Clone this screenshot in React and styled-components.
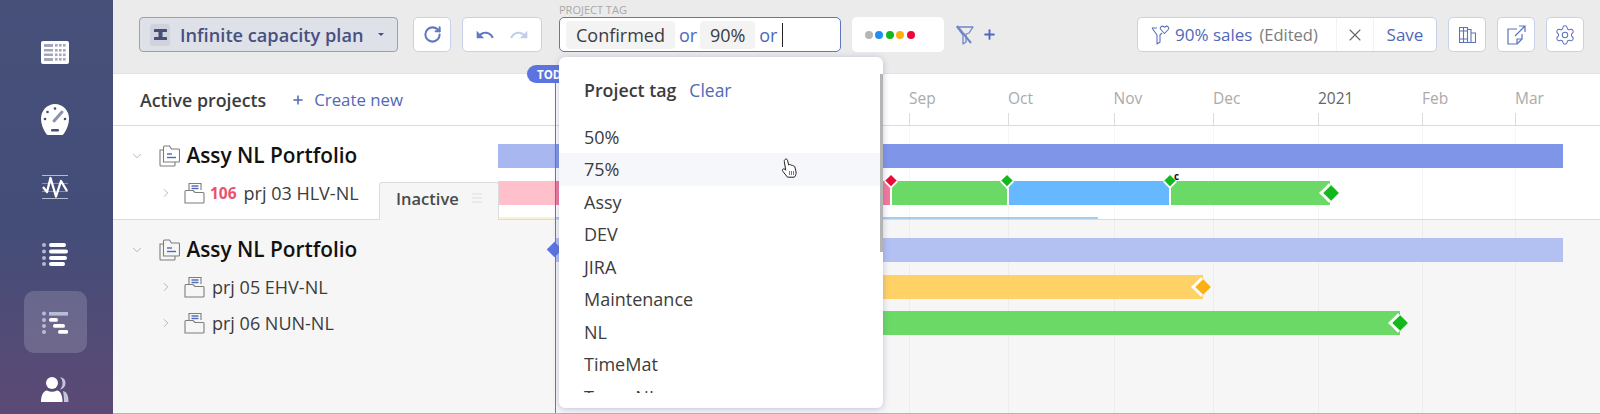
import React from 'react';
import styled, { createGlobalStyle } from 'styled-components';
import { RotateCw, Plus, X, Settings, ChevronDown, ChevronRight, Menu } from 'lucide-react';
import { MdUndo, MdRedo } from 'react-icons/md';

const GlobalStyle = createGlobalStyle`
    html, body {
        margin: 0;
        padding: 0;
        background: #fff;
    }
    * {
        box-sizing: border-box;
    }
    body {
        font-family: "Open Sans", "Liberation Sans", sans-serif;
    }
`

const TableIcon = () => (
    <svg width="28" height="23" viewBox="0 0 28 23">
        <rect width="28" height="23" rx="2" fill="#fff" />
        <g fill="#a3a7bb">
            <rect x="3" y="3" width="9" height="3" />
            <rect x="3" y="8" width="9" height="2.5" />
            <rect x="3" y="12.5" width="9" height="2.5" />
            <rect x="3" y="17" width="9" height="3" />
            {[14, 18, 22].map(x => [3, 8, 12.5, 17].map(y => <rect key={`${x}-${y}`} x={x} y={y} width="2.6" height="2.6" />))}
        </g>
    </svg>
);

const GaugeIcon = () => (
    <svg width="28" height="31" viewBox="0 0 28 31">
        <path d="M14 0C6.300 0 0 6.500 0 14.500c0 6 2.300 11 5 15 .7 1 1.500 1.500 2.500 1.500h13c1 0 1.800-.5 2.500-1.500 2.700-4 5-9 5-15C28 6.500 21.700 0 14 0z" fill="#fff" />
        <path d="M13 17l8-9" stroke="#8d91aa" strokeWidth="3" strokeLinecap="round" />
        <g fill="#454e78">
            <circle cx="14" cy="4.500" r="1.300" />
            <circle cx="6.500" cy="8" r="1.300" />
            <circle cx="4" cy="15" r="1.300" />
            <circle cx="24" cy="15" r="1.300" />
            <rect x="10" y="25" width="8" height="2.400" rx="1" />
        </g>
    </svg>
);

const PulseIcon = () => (
    <svg width="26" height="24" viewBox="0 0 26 24">
        <path d="M0 .5h26M0 23.500h26" stroke="#b6bacd" strokeWidth="1" />
        <path d="M0 8.500h26M0 16.500h26" stroke="#8a8fac" strokeWidth="1" />
        <path d="M1 12l4 5 3.500-14L14 21.500 19 6l6 10" fill="none" stroke="#fff" strokeWidth="2.300" strokeLinejoin="round" />
    </svg>
);

const ListIcon = () => (
    <svg width="26" height="25" viewBox="0 0 26 25">
        <g fill="#b4b8d0">
            <circle cx="2" cy="3" r="2" />
            <circle cx="2" cy="9.500" r="2" />
            <circle cx="2" cy="16" r="2" />
            <circle cx="2" cy="22" r="2" />
        </g>
        <g fill="#fff">
            <rect x="7" y="1" width="17" height="4" rx="2" />
            <rect x="7" y="7.500" width="19" height="4" rx="2" />
            <rect x="7" y="14" width="18" height="4" rx="2" />
            <rect x="7" y="20" width="16" height="4" rx="2" />
        </g>
    </svg>
);

const GanttIcon = () => (
    <svg width="26" height="23" viewBox="0 0 26 23">
        <g fill="#b9bdd3">
            <circle cx="2" cy="2.500" r="2" />
            <circle cx="2" cy="9" r="2" />
            <circle cx="2" cy="15" r="2" />
            <circle cx="2" cy="21" r="2" />
            <rect x="7" y="1" width="19" height="3.600" />
        </g>
        <g fill="#fff">
            <rect x="7" y="7" width="9" height="3.800" rx="1.900" />
            <rect x="11" y="13" width="12" height="3.800" rx="1.900" />
            <rect x="16" y="19" width="10.500" height="3.800" rx="1.900" />
        </g>
    </svg>
);

const UsersIcon = () => (
    <svg width="28" height="25" viewBox="0 0 28 25">
        <path d="M19 0c4 1 5.500 3 5.500 6s-2 6-5.500 6.500c1.800-2 2.500-4 2.500-6.500S20.500 1.500 19 0z" fill="#c4c4d8" />
        <path d="M22 14c4 .8 5.500 4 5.500 11h-4.500c0-5-.5-8-1-11z" fill="#c4c4d8" />
        <circle cx="11" cy="6" r="6" fill="#fff" />
        <path d="M0 25c0-7 2.500-11 6-11.500 3 1.600 7 1.600 10 0 3.500.5 5.500 4.500 5.500 11.500z" fill="#fff" />
    </svg>
);

const PlanIcon = () => (
    <svg width="13" height="11" viewBox="0 0 13 11" fill="#474f78">
        <rect width="13" height="3" rx=".5" />
        <rect y="8" width="13" height="3" rx=".5" />
        <rect x="4.500" y="2" width="4" height="7" />
    </svg>
);

const FilterOffIcon = () => (
    <svg width="18" height="20" viewBox="0 0 18 20" fill="none" stroke="#7186c8" strokeWidth="1.300">
        <path d="M1 2h16l-4 6-3 1v8l-3 2v-9z" strokeLinejoin="round" />
        <path d="M1 1l14 17" strokeWidth="2" />
    </svg>
);

const HeartFilterIcon = () => (
    <svg width="19" height="20" viewBox="0 0 19 20" fill="none" stroke="#5c72bb" strokeWidth="1.100">
        <path d="M1 3h5M1 3l5 7v9l3-2v-7l2-2" strokeLinejoin="round" />
        <path d="M13.500 8.500l-3.700-4c-1.500-2 .8-4.300 3-2.800l.7.6.7-.6c2.200-1.500 4.500.8 3 2.800z" strokeLinejoin="round" />
    </svg>
);

const BooksIcon = () => (
    <svg width="17" height="17" viewBox="0 0 17 17" fill="none" stroke="#5c72bb" strokeWidth="1.100">
        <path d="M.5 1.500h4v15h-4zM4.500 1.500h4v15h-4zM8.500 3.500h3.500v13H8.500zM12 7h4.500v9.500H12zM.5 5h4M.5 13h8M4.500 5h4" />
    </svg>
);

const ExportIcon = () => (
    <svg width="19" height="20" viewBox="0 0 19 20" fill="none" stroke="#5c72bb" strokeWidth="1.200">
        <path d="M10 4H1v15h9l5-5V9" strokeLinejoin="round" />
        <path d="M10 19v-5h5" strokeLinejoin="round" />
        <path d="M8 11l10-10M12 1h6v6" />
    </svg>
);

const FolderStackIcon = () => (
    <svg width="21" height="22" viewBox="0 0 21 22" fill="none" stroke="#7d7d7d" strokeWidth="1.100">
        <path d="M4.500 17V2a1 1 0 0 1 1-1h5l2 3h7a1 1 0 0 1 1 1v11a1 1 0 0 1-1 1z" />
        <path d="M4.500 5H1v15a1 1 0 0 0 1 1h13a1 1 0 0 0 1-1v-3" />
        <path d="M8 9h5" stroke="#5068b8" strokeWidth="1.400" />
        <path d="M8 12.500h9" stroke="#5068b8" strokeWidth="1.400" />
    </svg>
);

const ProjectIcon = () => (
    <svg width="21" height="22" viewBox="0 0 21 22" fill="none" stroke="#7d7d7d" strokeWidth="1.100">
        <path d="M5 8V1.500h12V8" />
        <path d="M1 21V9.500a1 1 0 0 1 1-1h7l2 2h8a1 1 0 0 1 1 1V20a1 1 0 0 1-1 1z" />
        <path d="M7.500 4h7" stroke="#5068b8" strokeWidth="1.400" />
        <path d="M7.500 6.500h7" stroke="#5068b8" strokeWidth="1.400" />
    </svg>
);

const HandCursor = () => (
    <svg width="17" height="21" viewBox="0 0 17 21">
        <path d="M4 1.500c1-.8 2.200-.5 2.500.7l1.200 4.800 1-.4c.8-.2 1.300.2 1.500.8.700-.4 1.500-.2 1.800.6.800-.3 1.500.1 1.800.8l1.200 5c.4 2-.3 3.800-1.700 5.400H6.500L2 13.500c-.8-1-.8-2 0-2.500.8-.4 1.700 0 2.700 1.200L3.300 3.500c-.1-.9.100-1.500.7-2z" fill="#fff" stroke="#222" strokeWidth="1" strokeLinejoin="round" />
        <path d="M8.500 13v4M10.500 13v4M12.500 13v4" stroke="#555" strokeWidth=".8" />
    </svg>
);

const navItems = [
    { icon: <TableIcon /> },
    { icon: <GaugeIcon /> },
    { icon: <PulseIcon /> },
    { icon: <ListIcon /> },
    { icon: <GanttIcon />, active: true },
    { icon: <UsersIcon /> },
];

const months = [
    { label: 'Sep', width: 99 },
    { label: 'Oct', width: 105.5 },
    { label: 'Nov', width: 99.5 },
    { label: 'Dec', width: 105 },
    { label: '2021', width: 104, year: true },
    { label: 'Feb', width: 93 },
    { label: 'Mar', width: 85 },
];

const gridLines = [411, 510, 615.5, 715, 820, 924, 1017];

const colorDots = ['#b5b5b5', '#1e90f0', '#12b81e', '#fdb012', '#ea0a38'];

const tagOptions = ['50%', '75%', 'Assy', 'DEV', 'JIRA', 'Maintenance', 'NL', 'TimeMat', 'Team NL'];

const App = () => {
    return (
        <>
            <GlobalStyle />
            <Page>
                <Sidebar>
                    {navItems.map((item, i) => (
                        <NavItem key={i} $active={item.active}>{item.icon}</NavItem>
                    ))}
                </Sidebar>
                <Main>
                    <Toolbar>
                        <PlanSelect>
                            <PlanBadge><PlanIcon /></PlanBadge>
                            <PlanName>Infinite capacity plan</PlanName>
                            <Caret />
                        </PlanSelect>
                        <IconButton $ml={15}><RotateCw size={19} strokeWidth={2.6} color="#5f7ac4" /></IconButton>
                        <UndoGroup>
                            <MdUndo size={20} color="#5f7ac4" />
                            <MdRedo size={20} color="#c3cde8" />
                        </UndoGroup>
                        <TagField>
                            <FieldLabel>PROJECT TAG</FieldLabel>
                            <Chip $width={109}>Confirmed</Chip>
                            <OrWord $ml={4}>or</OrWord>
                            <Chip $width={55} $ml={3}>90%</Chip>
                            <OrWord $ml={4}>or</OrWord>
                            <Caretline />
                            <Dropdown>
                                <DropdownHead>
                                    <DropdownTitle>Project tag</DropdownTitle>
                                    <ClearLink>Clear</ClearLink>
                                </DropdownHead>
                                <OptionList>
                                    {tagOptions.map(option => (
                                        <OptionRow key={option} $hover={option === '75%'}>
                                            {option}
                                            {option === '75%' && <CursorSpot><HandCursor /></CursorSpot>}
                                        </OptionRow>
                                    ))}
                                </OptionList>
                                <ScrollThumb />
                            </Dropdown>
                        </TagField>
                        <ColorField>
                            {colorDots.map(color => <Dot key={color} $color={color} />)}
                        </ColorField>
                        <FilterOffSlot><FilterOffIcon /></FilterOffSlot>
                        <AddFilter><Plus size={15} strokeWidth={3} color="#5068c0" /></AddFilter>
                        <Spacer />
                        <SavedFilter>
                            <SavedName>
                                <HeartFilterIcon />
                                <SavedLabel>90% sales</SavedLabel>
                                <EditedLabel>(Edited)</EditedLabel>
                            </SavedName>
                            <SavedClose><X size={20} strokeWidth={1.3} color="#666" /></SavedClose>
                            <SaveLink>Save</SaveLink>
                        </SavedFilter>
                        <IconButton $ml={11}><BooksIcon /></IconButton>
                        <IconButton $ml={11}><ExportIcon /></IconButton>
                        <IconButton $ml={11}><Settings size={22} strokeWidth={1.1} color="#5c72bb" /></IconButton>
                    </Toolbar>

                    <ProjectHeader>
                        <HeaderLeft>
                            <HeaderTitle>Active projects</HeaderTitle>
                            <CreateNew><Plus size={14} strokeWidth={2.6} />Create new</CreateNew>
                        </HeaderLeft>
                        <Timeline>
                            {months.map(month => (
                                <Month key={month.label} $width={month.width} $year={month.year}>{month.label}</Month>
                            ))}
                        </Timeline>
                    </ProjectHeader>

                    <Body>
                        {gridLines.map(x => <GridLine key={x} $left={x} />)}
                        <TodayLine>
                            <TodayBadge>TODAY</TodayBadge>
                        </TodayLine>

                        <Section $top>
                            <Row>
                                <NameCell>
                                    <Chevron $wide><ChevronDown size={14} strokeWidth={1.2} color="#999" /></Chevron>
                                    <FolderStackIcon />
                                    <PortfolioName>Assy NL Portfolio</PortfolioName>
                                </NameCell>
                                <Track>
                                    <Bar $width={57.5} $color="#a9b7f0" />
                                    <Bar $width={1007.5} $color="#7f96e8" />
                                </Track>
                            </Row>
                            <Row>
                                <NameCell $child>
                                    <Chevron><ChevronRight size={14} strokeWidth={1.2} color="#999" /></Chevron>
                                    <ProjectIcon />
                                    <Count>106</Count>
                                    <ProjectName>prj 03 HLV-NL</ProjectName>
                                    <InactiveTab>
                                        Inactive
                                        <Menu size={14} strokeWidth={1} color="#ccc" />
                                    </InactiveTab>
                                </NameCell>
                                <Track>
                                    <Bar $width={57} $color="#ffc0cb" />
                                    <Bar $width={335} $color="#f4789a" />
                                    <Bar $width={115} $ml={2} $color="#6bd966" />
                                    <Bar $width={160} $ml={2} $color="#66b8ff" />
                                    <Bar $width={159} $ml={2} $color="#6bd966" />
                                    <Milestone $left={388} $color="#ea0a38" />
                                    <Milestone $left={504} $color="#12b81e" />
                                    <Milestone $left={667} $color="#12b81e" />
                                    <MilestoneTag>c</MilestoneTag>
                                    <EndMilestone $left={830} $color="#12b81e" />
                                </Track>
                            </Row>
                            <ThinRow>
                                <Bar $width={57} $color="#fbf1d4" />
                                <Bar $width={543} $color="#a6cdea" />
                            </ThinRow>
                        </Section>

                        <Section>
                            <Row>
                                <NameCell>
                                    <Chevron $wide><ChevronDown size={14} strokeWidth={1.2} color="#999" /></Chevron>
                                    <FolderStackIcon />
                                    <PortfolioName>Assy NL Portfolio</PortfolioName>
                                </NameCell>
                                <Track>
                                    <Bar $width={57} $color="transparent" />
                                    <Bar $width={1008} $color="#b3c0f2" />
                                    <TodayDiamond />
                                </Track>
                            </Row>
                            <Row>
                                <NameCell $child>
                                    <Chevron><ChevronRight size={14} strokeWidth={1.2} color="#999" /></Chevron>
                                    <ProjectIcon />
                                    <ProjectName>prj 05 EHV-NL</ProjectName>
                                </NameCell>
                                <Track>
                                    <Bar $width={105} $color="transparent" />
                                    <Bar $width={600} $color="#ffd166" />
                                    <EndMilestone $left={702} $color="#fdb012" />
                                </Track>
                            </Row>
                            <Row>
                                <NameCell $child>
                                    <Chevron><ChevronRight size={14} strokeWidth={1.2} color="#999" /></Chevron>
                                    <ProjectIcon />
                                    <ProjectName>prj 06 NUN-NL</ProjectName>
                                </NameCell>
                                <Track>
                                    <Bar $width={105} $color="transparent" />
                                    <Bar $width={797} $color="#6bd966" />
                                    <EndMilestone $left={899} $color="#12b81e" />
                                </Track>
                            </Row>
                        </Section>
                    </Body>
                </Main>
            </Page>
        </>
    );
}

const Page = styled.div`
    width: 1600px;
    height: 414px;
    display: flex;
    overflow: hidden;
`

const Sidebar = styled.nav`
    width: 113px;
    flex-shrink: 0;
    padding: 21.5px 3px 0 0;
    display: flex;
    flex-direction: column;
    align-items: center;
    gap: 5.4px;
    background: linear-gradient(180deg, #465079 0%, #434d78 55%, #5c4a75 100%);
`

const NavItem = styled.div`
    width: 63px;
    height: 62px;
    flex-shrink: 0;
    display: flex;
    align-items: center;
    justify-content: center;
    border-radius: 10px;
    background: ${p => p.$active ? 'rgba(255, 255, 255, 0.16)' : 'transparent'};
`

const Main = styled.div`
    flex: 1;
    min-width: 0;
    display: flex;
    flex-direction: column;
    border-bottom: 1px solid #b4b4b4;
`

const Toolbar = styled.div`
    height: 74px;
    padding: 17px 16px 0 26px;
    flex-shrink: 0;
    display: flex;
    align-items: flex-start;
    background: #ebebeb;
    border-bottom: 1px solid #e2e2e2;
`

const PlanSelect = styled.div`
    width: 259px;
    height: 35px;
    padding: 0 10px;
    display: flex;
    align-items: center;
    background: #dfe1e8;
    border: 1px solid #9aa0b5;
    border-radius: 4px;
`

const PlanBadge = styled.span`
    width: 20px;
    height: 22px;
    flex-shrink: 0;
    display: flex;
    align-items: center;
    justify-content: center;
    background: #d0d3dd;
    border-radius: 3px;
`

const PlanName = styled.span`
    margin-left: 10px;
    font-size: 18.2px;
    font-weight: 600;
    color: #475080;
    white-space: nowrap;
`

const Caret = styled.span`
    margin-left: 15px;
    flex-shrink: 0;
    border-left: 3.5px solid transparent;
    border-right: 3.5px solid transparent;
    border-top: 3.5px solid #475080;
`

const IconButton = styled.div`
    width: 38px;
    height: 35px;
    margin-left: ${p => p.$ml || 0}px;
    display: flex;
    align-items: center;
    justify-content: center;
    flex-shrink: 0;
    background: #fff;
    border: 1px solid #c8d0ea;
    border-radius: 5px;
`

const UndoGroup = styled.div`
    width: 80px;
    height: 35px;
    margin-left: 11px;
    padding: 0 12px;
    display: flex;
    align-items: center;
    justify-content: space-between;
    background: #fff;
    border: 1px solid #c8d0ea;
    border-radius: 5px;
`

const TagField = styled.div`
    position: relative;
    width: 282px;
    height: 35px;
    margin-left: 17px;
    padding-left: 6px;
    display: flex;
    align-items: center;
    background: #fff;
    border: 1px solid #5f75bd;
    border-radius: 5px;
`

const FieldLabel = styled.span`
    position: absolute;
    left: -1px;
    top: -15px;
    font-size: 11px;
    line-height: 14px;
    color: #a9a9a9;
    white-space: nowrap;
`

const Chip = styled.span`
    width: ${p => p.$width}px;
    height: 28px;
    margin-left: ${p => p.$ml || 0}px;
    flex-shrink: 0;
    display: flex;
    align-items: center;
    justify-content: center;
    font-size: 18px;
    color: #3c3c3c;
    background: #f3f3f3;
    border-radius: 4px;
`

const OrWord = styled.span`
    margin-left: ${p => p.$ml || 0}px;
    font-size: 18px;
    color: #4f68b8;
`

const Caretline = styled.span`
    width: 1px;
    height: 24px;
    margin-left: 5px;
    background: #222;
`

const Dropdown = styled.div`
    position: absolute;
    left: -1px;
    top: 39px;
    z-index: 10;
    width: 324px;
    height: 351px;
    background: #fff;
    border-radius: 6px;
    box-shadow: 0 1px 6px rgba(90, 95, 160, 0.35);
`

const DropdownHead = styled.div`
    height: 63.5px;
    padding: 3px 25px 0;
    display: flex;
    align-items: center;
    gap: 13px;
`

const DropdownTitle = styled.span`
    font-size: 17.8px;
    font-weight: 600;
    color: #3c3c3c;
`

const ClearLink = styled.span`
    font-size: 17.5px;
    color: #4f68b8;
`

const OptionList = styled.div`
    height: 272px;
    overflow: hidden;
`

const OptionRow = styled.div`
    position: relative;
    height: 32.5px;
    padding-left: 25px;
    display: flex;
    align-items: center;
    font-size: 18px;
    color: #3c3c3c;
    background: ${p => p.$hover ? '#f6f7fb' : 'transparent'};
`

const CursorSpot = styled.span`
    position: absolute;
    left: 222px;
    top: 5px;
    line-height: 0;
`

const ScrollThumb = styled.div`
    position: absolute;
    right: 0;
    top: 17px;
    width: 3px;
    height: 178px;
    background: #b4b4b4;
`

const ColorField = styled.div`
    width: 92px;
    height: 35px;
    margin-left: 11px;
    padding-left: 13px;
    display: flex;
    align-items: center;
    gap: 2.4px;
    background: #fff;
    border-radius: 5px;
`

const Dot = styled.span`
    width: 8px;
    height: 8px;
    border-radius: 50%;
    background: ${p => p.$color};
`

const FilterOffSlot = styled.span`
    margin: 8px 0 0 12px;
    line-height: 0;
`

const AddFilter = styled.span`
    margin: 10px 0 0 8px;
    line-height: 0;
`

const Spacer = styled.div`
    flex: 1;
`

const SavedFilter = styled.div`
    width: 300px;
    height: 35px;
    display: flex;
    align-items: stretch;
    background: #fff;
    border: 1px solid #c8d0ea;
    border-radius: 5px;
`

const SavedName = styled.div`
    flex: 1;
    padding-left: 13px;
    display: flex;
    align-items: center;
    gap: 5px;
`

const SavedLabel = styled.span`
    font-size: 17px;
    color: #4f68b8;
    white-space: nowrap;
`

const EditedLabel = styled.span`
    margin-left: 2px;
    font-size: 16.5px;
    color: #7c7c7c;
    white-space: nowrap;
`

const SavedClose = styled.div`
    width: 38px;
    display: flex;
    align-items: center;
    justify-content: center;
    border-left: 1px solid #f3f3f3;
    border-right: 1px solid #f3f3f3;
`

const SaveLink = styled.div`
    width: 62px;
    display: flex;
    align-items: center;
    justify-content: center;
    font-size: 17px;
    color: #4f68b8;
`

const ProjectHeader = styled.div`
    height: 52px;
    flex-shrink: 0;
    display: flex;
    background: #fff;
    border-bottom: 1px solid #dcdcdc;
`

const HeaderLeft = styled.div`
    width: 385px;
    flex-shrink: 0;
    padding-left: 27px;
    display: flex;
    align-items: center;
`

const HeaderTitle = styled.span`
    font-size: 17.8px;
    font-weight: 600;
    color: #3c3c3c;
`

const CreateNew = styled.span`
    margin-left: 25px;
    display: flex;
    align-items: center;
    gap: 9px;
    font-size: 16.8px;
    color: #4f68b8;
`

const Timeline = styled.div`
    flex: 1;
    padding-left: 411px;
    display: flex;
`

const Month = styled.div`
    width: ${p => p.$width}px;
    height: 51px;
    padding-top: 14px;
    flex-shrink: 0;
    font-size: 15.5px;
    line-height: 20px;
    color: ${p => p.$year ? '#666' : '#aaa'};
    background: linear-gradient(#dcdcdc, #dcdcdc) left bottom / 1px 12px no-repeat;
`

const Body = styled.div`
    position: relative;
    flex: 1;
    min-height: 0;
    display: flex;
    flex-direction: column;
    background: #f6f6f6;
`

const GridLine = styled.div`
    position: absolute;
    left: ${p => 385 + p.$left}px;
    top: 0;
    bottom: 0;
    z-index: 1;
    width: 1px;
    background: rgba(0, 0, 0, 0.035);
`

const TodayLine = styled.div`
    position: absolute;
    left: 442px;
    top: -52px;
    bottom: 0;
    z-index: 4;
    width: 1px;
    background: #5b74e0;
`

const TodayBadge = styled.span`
    position: absolute;
    left: -28px;
    top: -9px;
    height: 18px;
    padding: 0 10px;
    display: flex;
    align-items: center;
    font-size: 11.5px;
    font-weight: 700;
    color: #fff;
    background: #5b74e0;
    border-radius: 9px;
`

const Section = styled.div`
    flex: ${p => p.$top ? '0 0 auto' : 1};
    padding-top: 12px;
    background: ${p => p.$top ? '#fff' : 'transparent'};
    border-bottom: ${p => p.$top ? '1px solid #dcdcdc' : 'none'};
`

const Row = styled.div`
    height: 36.5px;
    display: flex;
`

const NameCell = styled.div`
    position: relative;
    width: 385px;
    flex-shrink: 0;
    padding-left: ${p => p.$child ? 46 : 17}px;
    display: flex;
    align-items: center;
`

const Chevron = styled.span`
    width: ${p => p.$wide ? 28.5 : 25}px;
    flex-shrink: 0;
    line-height: 0;
`

const PortfolioName = styled.span`
    margin: 0 0 2px 7px;
    font-size: 20.8px;
    font-weight: 600;
    color: #111;
    white-space: nowrap;
`

const Count = styled.span`
    margin-left: 5px;
    font-size: 15.5px;
    font-weight: 700;
    color: #e8526e;
`

const ProjectName = styled.span`
    margin-left: 7px;
    font-size: 18px;
    color: #3c3c3c;
    white-space: nowrap;
`

const InactiveTab = styled.div`
    position: absolute;
    left: 266px;
    right: -1px;
    top: 7px;
    height: 38.5px;
    z-index: 3;
    padding: 0 14px 6px 16px;
    display: flex;
    align-items: center;
    justify-content: space-between;
    font-size: 16.5px;
    font-weight: 600;
    color: #4a4a4a;
    background: #f6f6f6;
    border: 1px solid #dcdcdc;
    border-bottom: none;
    border-radius: 3px 3px 0 0;
`

const Track = styled.div`
    position: relative;
    flex: 1;
    height: 24px;
    margin-top: 6px;
    z-index: 2;
    display: flex;
`

const ThinRow = styled.div`
    height: 2px;
    margin: 6px 0 0 385px;
    display: flex;
`

const Bar = styled.div`
    width: ${p => p.$width}px;
    margin-left: ${p => p.$ml || 0}px;
    flex-shrink: 0;
    background: ${p => p.$color};
`

const Milestone = styled.span`
    position: absolute;
    left: ${p => p.$left}px;
    top: -4px;
    width: 10px;
    height: 10px;
    background: ${p => p.$color};
    border-right: 2px solid #fff;
    border-bottom: 2px solid #fff;
    transform: rotate(45deg);
`

const MilestoneTag = styled.span`
    position: absolute;
    left: 676px;
    top: -10px;
    font-size: 10px;
    line-height: 10px;
    font-weight: 700;
    color: #111;
`

const EndMilestone = styled.span`
    position: absolute;
    left: ${p => p.$left - 6}px;
    top: 5px;
    width: 14px;
    height: 14px;
    background: ${p => p.$color};
    border-left: 3px solid #fff;
    border-bottom: 3px solid #fff;
    transform: rotate(45deg);
`

const TodayDiamond = styled.span`
    position: absolute;
    left: 51px;
    top: 6px;
    width: 11px;
    height: 11px;
    background: #5b74e0;
    transform: rotate(45deg);
`

export default App;
